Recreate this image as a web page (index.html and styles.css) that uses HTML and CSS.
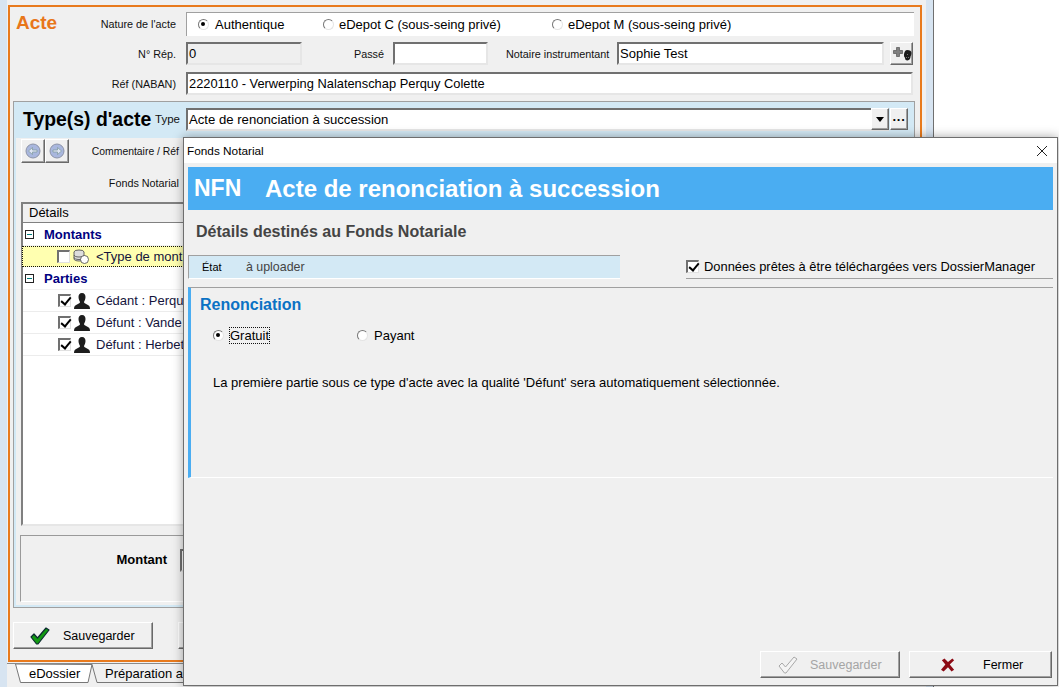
FILE: index.html
```html
<!DOCTYPE html>
<html lang="fr">
<head>
<meta charset="utf-8">
<title>Fonds Notarial</title>
<link rel="stylesheet" href="styles.css">
</head>
<body>
<div class="desktop">
  <div class="shell">
    <div class="content">
      <div class="frame">
        <div class="row row-nature">
          <div class="label-col"><span class="acte">Acte</span><span class="lbl">Nature de l'acte</span></div>
          <div class="radio-box">
            <span class="opt opt-a"><i class="radio on"></i>Authentique</span>
            <span class="opt opt-b"><i class="radio"></i>eDepot C (sous-seing privé)</span>
            <span class="opt opt-c"><i class="radio"></i>eDepot M (sous-seing privé)</span>
          </div>
        </div>
        <div class="row row-rep">
          <div class="label-col end"><span class="lbl">N° Rép.</span></div>
          <div class="field field-rep">0</div>
          <span class="lbl lbl-passe">Passé</span>
          <div class="field field-passe"></div>
          <span class="lbl lbl-notaire">Notaire instrumentant</span>
          <div class="field field-notaire">Sophie Test</div>
          <button class="btn btn-add" type="button">
            <svg width="20" height="18" viewBox="0 0 20 18"><path d="M1.500 5.500h3v-3h3v3h3v3h-3v3h-3v-3h-3z" fill="#808080" stroke="#555" stroke-width=".7"/><path d="M15 5c3 0 4.500 1 4.500 3 0 2-1 3-1 4s-1 3.500-3 3.500-2.500-1-2.500-3c-1 0-1-1.500-1-3s1-4.500 3-4.500z" fill="#1c1c1c"/><path d="M15 9h1v1h-1zM16 12h1v1h-1zM14 12h1v1h-1z" fill="#777"/></svg>
          </button>
        </div>
        <div class="row row-ref">
          <div class="label-col end"><span class="lbl">Réf (NABAN)</span></div>
          <div class="field field-grow">2220110 - Verwerping Nalatenschap Perquy Colette</div>
        </div>
        <div class="panel">
          <div class="panel-head">
            <h2 class="type-title">Type(s) d'acte</h2>
            <span class="lbl lbl-type">Type</span>
            <div class="field field-combo">Acte de renonciation à succession</div>
            <button class="btn btn-drop" type="button"><i class="caret"></i></button>
            <button class="btn btn-more" type="button">···</button>
          </div>
          <div class="panel-body">
            <div class="comment-row">
              <button class="btn btn-nav" type="button">
                <svg width="16" height="16" viewBox="0 0 16 16"><circle cx="8" cy="8" r="7" fill="#a9b7de" stroke="#8d94a8"/><path d="M3.500 8l4-3.500V7h4.500v2H7.500v2.500z" fill="#dfe5f5" stroke="#7d9a98" stroke-width=".7"/></svg>
              </button>
              <button class="btn btn-nav" type="button">
                <svg width="16" height="16" viewBox="0 0 16 16"><circle cx="8" cy="8" r="7" fill="#a9b7de" stroke="#8d94a8"/><path d="M12.500 8l-4-3.500V7H4v2h4.500v2.500z" fill="#dfe5f5" stroke="#7d9a98" stroke-width=".7"/></svg>
              </button>
              <span class="lbl lbl-comment">Commentaire / Réf</span>
            </div>
            <div class="fonds-row"><span class="lbl">Fonds Notarial</span></div>
            <div class="tree">
              <div class="tree-head">Détails</div>
              <div class="tree-group"><i class="minus"></i><span>Montants</span></div>
              <div class="tree-item selected">
                <i class="check"></i>
                <svg class="coin" width="16" height="15" viewBox="0 0 16 15"><g fill="#ddd" stroke="#444" stroke-width=".8"><ellipse cx="6" cy="3" rx="5" ry="2"/><path d="M1 3v7c0 1 2 2 5 2s5-1 5-2V3"/><path d="M1 6c0 1 2 2 5 2s5-1 5-2M1 8.500c0 1 2 2 5 2s5-1 5-2" fill="none"/></g><circle cx="11.500" cy="10.500" r="4" fill="#fff" stroke="#444" stroke-width=".8"/></svg>
                <span>&lt;Type de mont</span>
              </div>
              <div class="tree-group group-parties"><i class="minus"></i><span>Parties</span></div>
              <div class="tree-item person-row">
                <i class="check on"></i>
                <svg class="person" width="16" height="16" viewBox="0 0 16 16"><path d="M8 0c2.500 0 3.500 2 3.500 4S10.500 8 10 9c0 1 1 1.500 3 2.500 2 .8 3 2 3 4.500H0c0-2.500 1-3.700 3-4.500C5 10.500 6 10 6 9 5.500 8 4.500 6 4.500 4S5.500 0 8 0z" fill="#1d1d1d"/></svg>
                <span>Cédant : Perquy</span>
              </div>
              <div class="tree-item person-row">
                <i class="check on"></i>
                <svg class="person" width="16" height="16" viewBox="0 0 16 16"><path d="M8 0c2.500 0 3.500 2 3.500 4S10.500 8 10 9c0 1 1 1.500 3 2.500 2 .8 3 2 3 4.500H0c0-2.500 1-3.700 3-4.500C5 10.500 6 10 6 9 5.500 8 4.500 6 4.500 4S5.500 0 8 0z" fill="#1d1d1d"/></svg>
                <span>Défunt : Vande</span>
              </div>
              <div class="tree-item person-row">
                <i class="check on"></i>
                <svg class="person" width="16" height="16" viewBox="0 0 16 16"><path d="M8 0c2.500 0 3.500 2 3.500 4S10.500 8 10 9c0 1 1 1.500 3 2.500 2 .8 3 2 3 4.500H0c0-2.500 1-3.700 3-4.500C5 10.500 6 10 6 9 5.500 8 4.500 6 4.500 4S5.500 0 8 0z" fill="#1d1d1d"/></svg>
                <span>Défunt : Herbet</span>
              </div>
            </div>
            <div class="amount-box">
              <span class="amount-label">Montant</span>
              <div class="field field-amount"></div>
            </div>
          </div>
        </div>
        <div class="actions">
          <button class="btn btn-save" type="button">
            <svg width="20" height="18" viewBox="0 0 20 18"><path d="M1 10l3-3 3.500 4L16 1l3 2L8 17h-1.500z" fill="#129a12" stroke="#0c2a30" stroke-width="1.200" stroke-linejoin="round"/></svg>
            <span>Sauvegarder</span>
          </button>
          <button class="btn btn-second" type="button"></button>
        </div>
      </div>
      <div class="tabs">
        <div class="tab active">
          <svg class="tab-shape" width="180" height="20" viewBox="0 0 180 20"><path d="M.5 0L5.500 18.500H73L77 .5z" fill="#fff" stroke="#777"/><path d="M77 .5L82 18.500H180" fill="none" stroke="#777"/></svg>
          <span class="tab-text">eDossier</span>
        </div>
        <div class="tab other">Préparation actes</div>
      </div>
    </div>
  </div>

  <section class="dialog">
    <header class="dlg-title">
      <span>Fonds Notarial</span>
      <svg class="dlg-x" width="12" height="12" viewBox="0 0 12 12"><path d="M1 1l10 10M11 1L1 11" stroke="#222" stroke-width="1" fill="none"/></svg>
    </header>
    <div class="dlg-banner"><span class="nfn">NFN</span><span class="dlg-name">Acte de renonciation à succession</span></div>
    <h3 class="dlg-sub">Détails destinés au Fonds Notariale</h3>
    <div class="status-row">
      <div class="status"><span class="st-l">État</span><span class="st-v">à uploader</span></div>
      <label class="ready"><i class="check on"></i><span>Données prêtes à être téléchargées vers DossierManager</span></label>
    </div>
    <div class="renon">
      <h4>Renonciation</h4>
      <div class="renon-opts">
        <span class="ropt ropt-a"><i class="radio on"></i><span class="focus">Gratuit</span></span>
        <span class="ropt"><i class="radio"></i><span>Payant</span></span>
      </div>
      <p>La première partie sous ce type d'acte avec la qualité 'Défunt' sera automatiquement sélectionnée.</p>
    </div>
    <div class="dlg-actions">
      <button class="btn btn-dlg disabled" type="button">
        <svg width="20" height="18" viewBox="0 0 20 18"><path d="M1 10l3-3 3.500 4L16 1l3 2L8 17h-1.500z" fill="#f4f4f4" stroke="#a8a8a8" stroke-width="1"/></svg>
        <span>Sauvegarder</span>
      </button>
      <button class="btn btn-dlg close" type="button">
        <svg width="14" height="14" viewBox="0 0 16 15"><path d="M1 2l3-2 4 4 5-4 2 2-5 5 5 6-3 2-4-5-5 5-3-2 5-6z" fill="#8c0a14"/></svg>
        <span>Fermer</span>
      </button>
    </div>
  </section>
</div>
</body>
</html>
```

FILE: styles.css
```css
* { box-sizing: border-box; }
html, body { margin: 0; padding: 0; }
body { width: 1059px; height: 687px; overflow: hidden; background: #fff; font-family: "Liberation Sans", Arial, sans-serif; font-size: 13px; color: #000; }
i { display: block; font-style: normal; }
h2, h3, h4, p { margin: 0; }
.desktop { position: relative; width: 1059px; height: 687px; overflow: hidden; }

.shell { width: 934px; height: 687px; padding: 0 7px 0 7px; background: #d7e4f1; border-right: 1px solid #707070; }
.content { height: 687px; padding-top: 5px; background: #f0f0f0; }
.frame { width: 914px; height: 657px; margin-left: 1px; border: 2px solid #e87a1d; padding: 5px 6px 0 6px; }

.row { display: flex; align-items: center; }
.row-rep { margin-top: 6px; height: 23px; }
.row-ref { margin-top: 7px; height: 23px; margin-right: 1px; }
.label-col { width: 160px; margin-right: 10px; flex: none; display: flex; justify-content: space-between; align-items: center; }
.label-col.end { justify-content: flex-end; }
.lbl { font-size: 10.800px; color: #111; white-space: nowrap; flex: none; }
.acte { font-size: 19px; font-weight: 700; color: #e8761a; line-height: 22px; margin-top: -2px; }

.radio-box { flex: 1; height: 24px; background: #fff; border-top: 1px solid #a0a0a0; border-left: 1px solid #a0a0a0; display: flex; align-items: center; }
.opt { display: flex; align-items: center; gap: 5px; white-space: nowrap; }
.opt-a { margin-left: 11px; width: 125px; gap: 6px; }
.opt-b { width: 229px; }
.radio { width: 11px; height: 11px; border-radius: 50%; background: #fff; border: 1.500px solid; border-color: #777 #e4e4e4 #e4e4e4 #777; position: relative; flex: none; }
.radio.on::after { content: ""; position: absolute; left: 2px; top: 2px; width: 4px; height: 4px; border-radius: 50%; background: #000; }

.field { height: 23px; background: #fff; border: 2px solid; border-color: #707070 #e6e6e6 #e6e6e6 #707070; padding: 0 1px; line-height: 19px; white-space: nowrap; overflow: hidden; flex: none; }
.field-rep { width: 116px; background: #efefef; }
.lbl-passe { width: 30px; margin-left: 52px; }
.field-passe { width: 95px; margin-left: 9px; }
.lbl-notaire { width: 102px; margin-left: 18px; }
.field-notaire { width: 267px; margin-left: 9px; }
.field-grow { flex: 1; font-size: 12.870px; }

.btn { display: flex; align-items: center; justify-content: center; padding: 0; background: #f0f0f0; font: inherit; color: #000; border: 1px solid; border-color: #fff #696969 #696969 #fff; box-shadow: inset -1px -1px 0 #a0a0a0; }
.btn-add { width: 23px; height: 23px; margin-left: 6px; flex: none; }

.panel { height: 507px; margin: 6px -1px 0 -3px; border: 1px solid #a0a0a0; background: #d3e9f5; display: flex; flex-direction: column; }
.panel-head { height: 34px; padding: 6px 6px 0 9px; display: flex; align-items: flex-start; flex: none; }
.type-title { font-size: 19.400px; line-height: 22px; font-weight: 700; width: 132px; flex: none; white-space: nowrap; }
.lbl-type { width: 24px; line-height: 23px; font-size: 11.500px; flex: none; }
.field-combo { width: 703px; margin-left: 7px; font-size: 13.150px; }
.btn-drop { width: 18px; height: 22px; margin-left: -18px; position: relative; flex: none; }
.caret { width: 0; height: 0; border: 4px solid transparent; border-top: 5px solid #000; border-bottom: 0; }
.btn-more { width: 18px; height: 22px; margin-left: 1px; font-size: 13px; font-weight: 700; line-height: 1; flex: none; }

.panel-body { flex: 1; margin: 2px; padding: 1px 5px 0; background: #f0f0f0; }
.comment-row { display: flex; align-items: center; height: 24px; }
.btn-nav { width: 24px; height: 24px; flex: none; }
.lbl-comment { width: 110px; text-align: right; font-size: 10.400px; }
.fonds-row { height: 39px; width: 158px; display: flex; justify-content: flex-end; align-items: center; }
.tree { height: 324px; width: 885px; background: #fff; border: 2px solid; border-color: #808080 #e6e6e6 #e6e6e6 #808080; }
.tree-head { height: 19px; line-height: 18px; background: #f0f0f0; padding-left: 6px; border-bottom: 1px solid #808080; }
.tree-group { height: 23px; display: flex; align-items: center; font-weight: 700; color: #000080; border-bottom: 1px solid #f2f2f2; }
.minus { width: 9px; height: 9px; margin-left: 2px; margin-right: 10px; border: 1px solid #222; position: relative; }
.minus::after { content: ""; position: absolute; left: 1px; top: 3px; width: 5px; height: 1px; background: #007a7a; }
.tree-item { height: 22px; display: flex; align-items: center; padding-left: 35px; color: #14143c; border-bottom: 1px solid #ececec; }
.tree-item.selected { height: 21px; background: #ffffb0; border: 1px dotted #111; padding-left: 34px; margin-left: -1px; }
.check { width: 13px; height: 13px; background: #fff; border: solid; border-width: 2px 1px 1px 2px; border-color: #707070 #e0e0e0 #e0e0e0 #707070; position: relative; flex: none; }
.check.on::after { content: ""; position: absolute; left: 3px; top: -1px; width: 4px; height: 8px; border: solid #000; border-width: 0 2px 2px 0; transform: rotate(40deg); }
.coin { margin-left: 3px; margin-right: 7px; flex: none; }
.person { margin-left: 3px; margin-right: 6px; flex: none; }

.amount-box { height: 67px; margin-top: 9px; margin-left: -1px; width: 886px; border: 1px solid #9a9a9a; border-right-color: #fff; border-bottom-color: #fff; display: flex; align-items: flex-start; padding-top: 13px; }
.amount-label { width: 146px; text-align: right; font-weight: 700; line-height: 22px; }
.field-amount { width: 120px; margin-left: 13px; }

.actions { display: flex; margin-top: 14px; margin-left: -3px; }
.btn-save { width: 140px; height: 27px; justify-content: flex-start; padding-left: 16px; font-size: 12.500px; }
.btn-save span { margin-left: 13px; }
.btn-second { width: 140px; height: 27px; margin-left: 25px; }

.tabs { height: 23px; border-top: 1px solid #8a8a8a; margin-top: 1px; display: flex; position: relative; }
.tab { height: 20px; line-height: 20px; }
.tab.active { position: relative; width: 85px; margin-left: 8px; }
.tab-shape { position: absolute; left: 0; top: 0; }
.tab-text { position: relative; margin-left: 14px; }
.tab.other { margin-left: 5px; white-space: nowrap; position: relative; }

.dialog { position: absolute; left: 183px; top: 137px; width: 875px; height: 549px; background: #f0f0f0; border: 1px solid #6e6e6e; box-shadow: 0 0 10px rgba(0, 0, 0, .35); }
.dlg-title { height: 25px; background: #fff; display: flex; align-items: center; justify-content: space-between; padding: 0 9px 0 3px; font-size: 11.800px; }
.dlg-banner { height: 43px; margin: 4px 4px 0 4px; background: #4aadf2; color: #fff; font-weight: 700; display: flex; align-items: center; padding-left: 6px; }
.nfn { width: 71px; flex: none; font-size: 23px; }
.dlg-name { font-size: 24px; }
.dlg-sub { margin: 13px 0 0 12px; font-size: 16px; line-height: 18px; font-weight: 700; color: #444; }
.status-row { display: flex; align-items: flex-start; margin: 14px 4px 0; height: 24px; }
.status { width: 432px; height: 24px; background: #d3e9f5; border-left: 1px solid #a0a0a0; border-top: 1px solid #a0a0a0; border-bottom: 1px solid #fff; display: flex; align-items: center; }
.st-l { width: 44px; margin-left: 13px; font-size: 11px; }
.st-v { color: #444; font-size: 12.400px; }
.ready { margin-left: 66px; flex: 1; height: 24px; display: flex; align-items: center; gap: 5px; border-bottom: 1px solid #a0a0a0; padding-bottom: 1px; white-space: nowrap; font-size: 12.900px; }
.renon { height: 191px; margin: 8px 4px 0; border-top: 1px solid #a0a0a0; border-left: 3px solid #4aadf2; border-bottom: 1px solid #fff; padding: 7px 0 0 9px; }
.renon h4 { font-size: 16px; line-height: 20px; font-weight: 700; color: #0b72c4; }
.renon-opts { display: flex; margin: 10px 0 0 13px; height: 20px; align-items: center; }
.ropt { display: flex; align-items: center; gap: 6px; }
.ropt-a { width: 144px; }
.focus { outline: 1px dotted #111; }
.renon p { margin: 30px 0 0 13px; font-size: 13px; line-height: 16px; }
.dlg-actions { display: flex; justify-content: flex-end; gap: 9px; margin: 173px 5px 0 0; }
.btn-dlg { width: 140px; height: 27px; font-size: 12.500px; justify-content: flex-start; padding-left: 17px; }
.btn-dlg svg { margin-right: 12px; }
.btn-dlg.close { width: 143px; padding-left: 31px; }
.btn-dlg.close svg { margin-right: 28px; }
.btn-dlg.disabled { color: #a5a5a5; }
```
